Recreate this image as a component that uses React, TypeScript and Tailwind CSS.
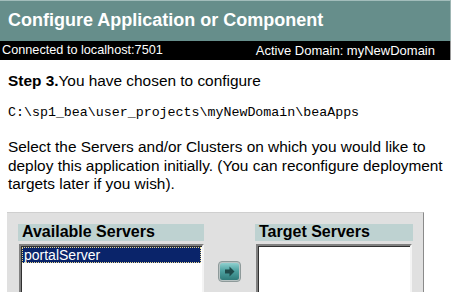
import React from 'react';

const ArrowButton: React.FC = () => (
  <svg width="23" height="21" viewBox="0 0 23 21">
    <defs>
      <linearGradient id="btn" x1="0" y1="0" x2="0" y2="1">
        <stop offset="0" stopColor="#8fd0cf" />
        <stop offset="0.45" stopColor="#4fa3a2" />
        <stop offset="1" stopColor="#2f7a79" />
      </linearGradient>
    </defs>
    <rect x="0.5" y="0.5" width="22" height="20" rx="3.5" fill="#b9c4c4" stroke="#8e9a9a" />
    <rect x="2" y="2" width="19" height="17" rx="2.5" fill="url(#btn)" />
    <path d="M7 8.5h4.5V5.5l5 5-5 5v-3H7z" fill="#1f4a4a" />
  </svg>
);

const App: React.FC = () => {
  return (
    <div className="w-[451px] h-[292px] overflow-hidden bg-white font-['Liberation_Sans',Arial,sans-serif]">
      <div className="h-[41px] bg-[#668e8b] border-t border-[#a2bdbb] border-r border-r-[#9db5b3] flex items-center pl-[8px] pb-[2px]">
        <h1 className="text-[18px] font-bold text-white leading-none">Configure Application or Component</h1>
      </div>
      <div className="h-[19px] bg-black border-r border-r-[#9a9a9a] flex items-center justify-between pl-[2px] pr-[15px] text-[13px] text-white leading-none">
        <span className="text-[12.7px]">Connected to localhost:7501</span>
        <span>Active Domain: myNewDomain</span>
      </div>

      <div className="pl-[8px] pt-[12px] text-black">
        <p className="text-[15.4px] leading-[18px]">
          <span className="font-bold">Step 3.</span>You have chosen to configure
        </p>
        <p className="mt-[15px] font-['Liberation_Mono','Courier_New',monospace] text-[13.3px] leading-[16px]">
          C:\sp1_bea\user_projects\myNewDomain\beaApps
        </p>
        <p className="mt-[17px] text-[15.4px] leading-[18.5px] whitespace-nowrap">
          Select the Servers and/or Clusters on which you would like to
          <br />
          deploy this application initially. (You can reconfigure deployment
          <br />
          targets later if you wish).
        </p>
      </div>

      <div className="ml-[7px] mt-[18px] w-[417px] h-[90px] bg-[#e0e0e0] border-t border-[#cfcfcf] border-r border-r-[#8a8a8a] pt-[11px] pl-[11px] flex">
        <div className="w-[186px] flex flex-col">
          <div className="h-[18px] bg-[#bed2d1] pl-[4px] flex items-center text-[16px] font-bold leading-none">
            Available Servers
          </div>
          <div className="mt-[3px] ml-[1px] h-[60px] bg-white border-2 border-t-[#808080] border-l-[#808080] border-r-[#f4f4f4] border-b-[#f4f4f4] shadow-[inset_1px_1px_0_#303030]">
            <div className="mt-[1px] ml-[1px] mr-[1px] h-[16px] bg-[#0a246a] border border-dotted border-[#e8d890] text-white text-[14px] leading-[14px] pl-[1px]">
              portalServer
            </div>
          </div>
        </div>
        <div className="w-[51px] flex justify-center pt-[37px]">
          <div>
            <ArrowButton />
          </div>
        </div>
        <div className="w-[158px] flex flex-col">
          <div className="h-[18px] bg-[#bed2d1] pl-[4px] flex items-center text-[16px] font-bold leading-none">
            Target Servers
          </div>
          <div className="mt-[3px] ml-[1px] w-[156px] h-[60px] bg-white border-2 border-t-[#808080] border-l-[#808080] border-r-[#f4f4f4] border-b-[#f4f4f4] shadow-[inset_1px_1px_0_#303030]" />
        </div>
      </div>
    </div>
  );
};

export default App;
